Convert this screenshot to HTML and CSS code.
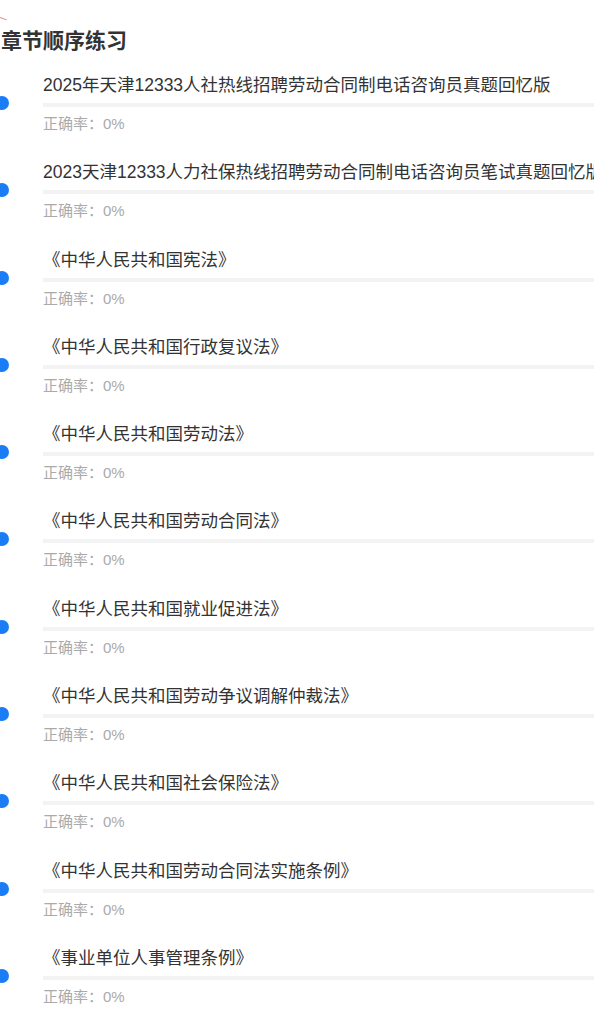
FILE: index.html
```html
<!DOCTYPE html>
<html lang="zh">
<head>
<meta charset="utf-8">
<link rel="stylesheet" href="styles.css">
</head>
<body>
<div class="page">
  <span class="mark"></span>
  <h1 class="heading">章节顺序练习</h1>
  <ul class="list">
    <li class="item"><span class="dot"></span><div class="name">2025年天津12333人社热线招聘劳动合同制电话咨询员真题回忆版</div><div class="bar"></div><div class="rate">正确率：0%</div></li>
    <li class="item"><span class="dot"></span><div class="name">2023天津12333人力社保热线招聘劳动合同制电话咨询员笔试真题回忆版</div><div class="bar"></div><div class="rate">正确率：0%</div></li>
    <li class="item"><span class="dot"></span><div class="name">《中华人民共和国宪法》</div><div class="bar"></div><div class="rate">正确率：0%</div></li>
    <li class="item"><span class="dot"></span><div class="name">《中华人民共和国行政复议法》</div><div class="bar"></div><div class="rate">正确率：0%</div></li>
    <li class="item"><span class="dot"></span><div class="name">《中华人民共和国劳动法》</div><div class="bar"></div><div class="rate">正确率：0%</div></li>
    <li class="item"><span class="dot"></span><div class="name">《中华人民共和国劳动合同法》</div><div class="bar"></div><div class="rate">正确率：0%</div></li>
    <li class="item"><span class="dot"></span><div class="name">《中华人民共和国就业促进法》</div><div class="bar"></div><div class="rate">正确率：0%</div></li>
    <li class="item"><span class="dot"></span><div class="name">《中华人民共和国劳动争议调解仲裁法》</div><div class="bar"></div><div class="rate">正确率：0%</div></li>
    <li class="item"><span class="dot"></span><div class="name">《中华人民共和国社会保险法》</div><div class="bar"></div><div class="rate">正确率：0%</div></li>
    <li class="item"><span class="dot"></span><div class="name">《中华人民共和国劳动合同法实施条例》</div><div class="bar"></div><div class="rate">正确率：0%</div></li>
    <li class="item"><span class="dot"></span><div class="name">《事业单位人事管理条例》</div><div class="bar"></div><div class="rate">正确率：0%</div></li>
  </ul>
</div>
</body>
</html>
```
FILE: styles.css
```css
html, body {
  margin: 0;
  padding: 0;
  background: #fff;
  overflow: hidden;
}
.page {
  position: relative;
  width: 594px;
  height: 1009px;
  overflow: hidden;
  font-family: "Noto Sans CJK SC", "Liberation Sans", sans-serif;
}
.mark {
  position: absolute;
  left: -1px;
  top: 18px;
  width: 8px;
  height: 1px;
  background: #d9808a;
  transform: rotate(20deg);
}
.heading {
  margin: 0;
  padding: 25px 0 0 1px;
  font-size: 21px;
  line-height: 28px;
  font-weight: 700;
  color: #333;
}
.list {
  list-style: none;
  margin: 20px 0 0;
  padding: 0 0 0 43px;
}
.item {
  position: relative;
  height: 87.3px;
}
.name {
  font-family: "Liberation Sans", "Noto Sans CJK SC", sans-serif;
  font-size: 17.5px;
  line-height: 24px;
  color: #333;
  white-space: nowrap;
}
.bar {
  margin-top: 6px;
  height: 4px;
  margin-right: -20px;
  background: #f3f3f3;
}
.rate {
  margin-top: 7px;
  font-family: "Liberation Sans", "Noto Sans CJK SC", sans-serif;
  font-size: 15px;
  line-height: 20px;
  color: #aaa;
}
.dot {
  position: absolute;
  left: -48px;
  top: 23px;
  width: 14px;
  height: 14px;
  border-radius: 50%;
  background: #1a7df5;
}
```
